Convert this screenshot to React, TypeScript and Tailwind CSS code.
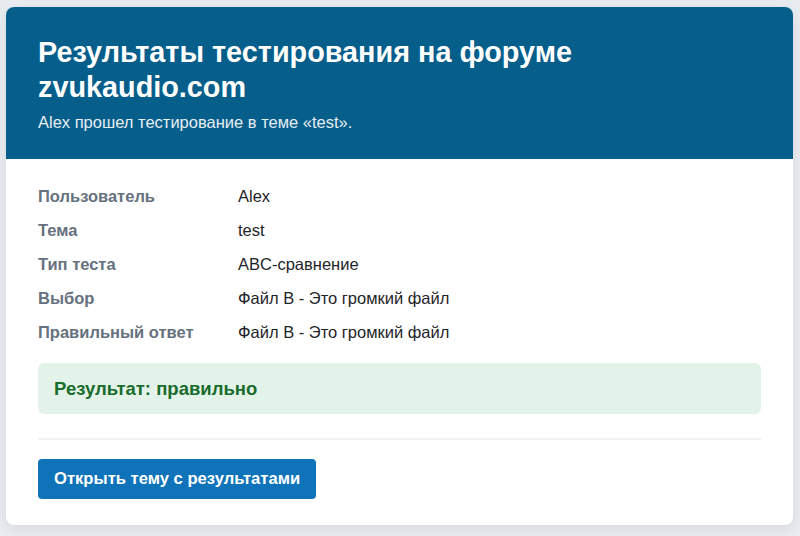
export default function App() {
  const rows: [string, string][] = [
    ["Пользователь", "Alex"],
    ["Тема", "test"],
    ["Тип теста", "ABC-сравнение"],
    ["Выбор", "Файл B - Это громкий файл"],
    ["Правильный ответ", "Файл B - Это громкий файл"],
  ];
  return (
    <div
      className="min-h-[536px] bg-[#e8ebef] pt-[7px] pl-[6px] pr-[7px] pb-[12px]"
      style={{ fontFamily: '"Liberation Sans", Arial, sans-serif' }}
    >
      <div className="overflow-hidden rounded-[8px] bg-white shadow-[0_4px_14px_rgba(0,0,0,0.08)]">
        <div className="bg-[#065e8b] px-[32px] pt-[28px] pb-[26px] text-white">
          <h1 className="text-[28.8px] font-bold leading-[35px]">
            Результаты тестирования на форуме zvukaudio.com
          </h1>
          <p className="mt-[6px] text-[16.5px] leading-[22px] text-[#e6eef4]">
            Alex прошел тестирование в теме «test».
          </p>
        </div>
        <div className="px-[32px] pt-[26px] pb-[26px]">
          <div className="flex flex-col gap-[12px]">
            {rows.map(([k, v]) => (
              <div key={k} className="flex text-[16.5px] leading-[22px]">
                <div className="w-[200px] shrink-0 font-bold text-[#66717e]">{k}</div>
                <div className="text-[#1f2429]">{v}</div>
              </div>
            ))}
          </div>
          <div className="mt-[20px] flex h-[51px] items-center rounded-[6px] bg-[#e4f3ea] px-[16px]">
            <span className="text-[18.5px] font-bold text-[#186c2c]">Результат: правильно</span>
          </div>
          <div className="mt-[24px] h-[2px] bg-[#eff1f4]" />
          <button className="mt-[19px] flex h-[40px] items-center rounded-[4px] bg-[#0f73b9] px-[16px] text-[16.6px] font-bold text-white">
            Открыть тему с результатами
          </button>
        </div>
      </div>
    </div>
  );
}
